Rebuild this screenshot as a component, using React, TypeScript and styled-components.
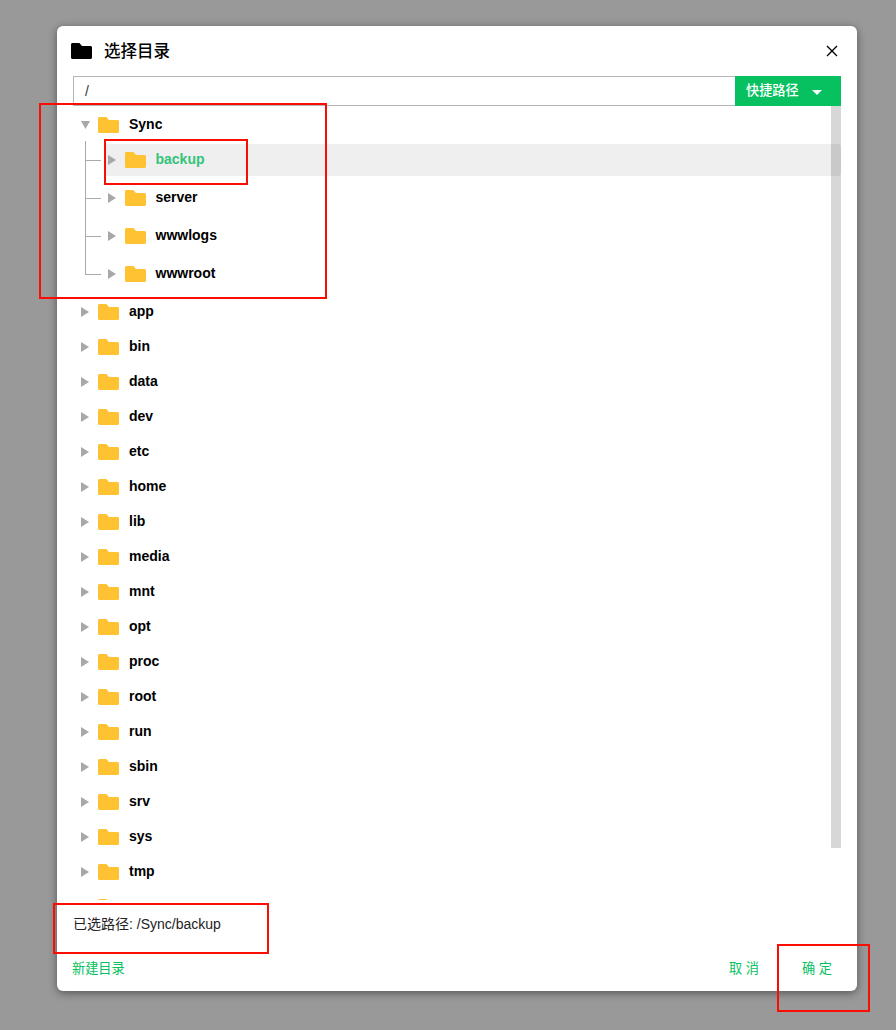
import styled, { createGlobalStyle } from "styled-components";

const GREEN = "#07c160";
const TEXT_FONT = `"Liberation Sans", "Noto Sans CJK SC", sans-serif`;

const ROOT_DIRS = [
  "app", "bin", "data", "dev", "etc", "home", "lib", "media", "mnt",
  "opt", "proc", "root", "run", "sbin", "srv", "sys", "tmp",
];
const SYNC_DIRS = ["backup", "server", "wwwlogs", "wwwroot"];

const GlobalStyle = createGlobalStyle`
  html, body {
    margin: 0;
    padding: 0;
    background: #999999;
  }
  * {
    box-sizing: border-box;
  }
`;

const Page = styled.div`
  position: relative;
  width: 896px;
  height: 1030px;
  padding: 26px 39px 0 57px;
  overflow: hidden;
  font-family: ${TEXT_FONT};
`;

const Dialog = styled.section`
  width: 800px;
  height: 965px;
  display: flex;
  flex-direction: column;
  background: #fff;
  border-radius: 6px;
  box-shadow: 0 2px 8px rgba(0, 0, 0, 0.45);
`;

const Header = styled.header`
  height: 50px;
  display: flex;
  align-items: center;
  padding: 0 15px 0 14px;
`;

const Title = styled.h2`
  flex: 1;
  margin: 0 0 3px 12px;
  font-size: 16.5px;
  font-weight: 500;
  color: #000;
`;

const CloseButton = styled.button`
  width: 20px;
  height: 20px;
  margin-bottom: 1px;
  padding: 0;
  border: 0;
  background: none;
  display: flex;
  align-items: center;
  justify-content: center;
`;

const PathBar = styled.div`
  height: 30px;
  margin: 0 16px;
  display: flex;
`;

const PathInput = styled.div`
  flex: 1;
  border: 1px solid #b5b5b5;
  border-right: 0;
  padding-left: 11px;
  font-size: 14px;
  line-height: 28px;
  color: #333;
`;

const QuickButton = styled.button`
  width: 106px;
  border: 0;
  padding: 0 0 4px 11px;
  display: flex;
  align-items: center;
  background: ${GREEN};
  color: #fff;
  font-family: ${TEXT_FONT};
  font-size: 13.2px;
  font-weight: 500;
`;

const Caret = styled.span`
  margin: 6px 0 0 13px;
  width: 0;
  height: 0;
  border-left: 5px solid transparent;
  border-right: 5px solid transparent;
  border-top: 5px solid #fff;
`;

const TreeArea = styled.div`
  position: relative;
  height: 794px;
  margin: 0 16px;
  overflow: hidden;
`;

const ScrollThumb = styled.div`
  position: absolute;
  top: 0;
  right: 0;
  width: 10px;
  height: 742px;
  background: rgba(0, 0, 0, 0.155);
`;

const DirName = styled.span<{ $selected?: boolean }>`
  margin: 0 0 3px 10px;
  font-size: 14px;
  font-weight: 700;
  color: ${(p) => (p.$selected ? "#33c47a" : "#000")};
`;

const RootRow = styled.div`
  height: 35px;
  display: flex;
  align-items: center;
  padding: 3px 0 0 8px;
`;

const ChildList = styled.div`
  display: flex;
  flex-direction: column;
  gap: 6px;
  margin: 3px 0;
  padding-left: 31px;
`;

const ChildRow = styled.div<{ $selected?: boolean; $first?: boolean }>`
  position: relative;
  height: 32px;
  display: flex;
  align-items: center;
  padding-left: 4px;
  border-radius: 4px;
  background: ${(p) => (p.$selected ? "#efefef" : "transparent")};

  ${DirName} {
    margin-bottom: 2px;
    margin-left: 9.5px;
  }

  /* tree connector */
  &::before {
    content: "";
    position: absolute;
    left: -19px;
    top: ${(p) => (p.$first ? "-3px" : "-23px")};
    height: ${(p) => (p.$first ? "19px" : "39px")};
    width: 15px;
    border-left: 1px solid #aaa;
    border-bottom: 1px solid #aaa;
  }
`;

const Arrow = styled.span<{ $open?: boolean }>`
  flex: none;
  width: ${(p) => (p.$open ? "9px" : "8px")};
  height: ${(p) => (p.$open ? "8px" : "10px")};
  margin-right: ${(p) => (p.$open ? "8px" : "9px")};
  background: #a8a8a8;
  clip-path: ${(p) =>
    p.$open ? "polygon(0 0, 100% 0, 50% 100%)" : "polygon(0 0, 100% 50%, 0 100%)"};
`;

const SelectedPath = styled.div`
  height: 48px;
  padding: 15px 0 0 16px;
  font-size: 14px;
  line-height: 18px;
  color: #222;
`;

const Footer = styled.footer`
  flex: 1;
  display: flex;
  align-items: center;
  padding: 0 25px 4px 15px;
  gap: 43px;
`;

const TextButton = styled.button<{ $push?: boolean }>`
  margin-right: ${(p) => (p.$push ? "auto" : "0")};
  padding: 0;
  border: 0;
  background: none;
  color: ${GREEN};
  font-family: ${TEXT_FONT};
  font-size: 13.2px;
`;

const Annotation = styled.div<{ $x: number; $y: number; $w: number; $h: number }>`
  position: absolute;
  left: ${(p) => p.$x}px;
  top: ${(p) => p.$y}px;
  width: ${(p) => p.$w}px;
  height: ${(p) => p.$h}px;
  border: 2px solid #fb0d05;
  pointer-events: none;
`;

function FolderIcon({ color = "#ffc232" }: { color?: string }) {
  return (
    <svg width="21" height="16" viewBox="0 0 21 16" style={{ flex: "none" }}>
      <path
        d="M1.5 0H8.4L11 3H19.5C20.3 3 21 3.7 21 4.5V14.5C21 15.3 20.3 16 19.5 16H1.5C.7 16 0 15.3 0 14.5V1.5C0 .7.7 0 1.5 0Z"
        fill={color}
      />
    </svg>
  );
}

function RootDir({ name }: { name: string }) {
  return (
    <RootRow>
      <Arrow />
      <FolderIcon />
      <DirName>{name}</DirName>
    </RootRow>
  );
}

export default function App() {
  return (
    <Page>
      <GlobalStyle />
      <Dialog>
        <Header>
          <FolderIcon color="#000" />
          <Title>选择目录</Title>
          <CloseButton>
            <svg width="12" height="12" viewBox="0 0 12 12">
              <path d="M1 1L11 11M11 1L1 11" stroke="#000" strokeWidth="1.4" />
            </svg>
          </CloseButton>
        </Header>
        <PathBar>
          <PathInput>/</PathInput>
          <QuickButton>
            快捷路径
            <Caret />
          </QuickButton>
        </PathBar>
        <TreeArea>
          <RootRow>
            <Arrow $open />
            <FolderIcon />
            <DirName>Sync</DirName>
          </RootRow>
          <ChildList>
            {SYNC_DIRS.map((name, i) => (
              <ChildRow key={name} $selected={i === 0} $first={i === 0}>
                <Arrow />
                <FolderIcon />
                <DirName $selected={i === 0}>{name}</DirName>
              </ChildRow>
            ))}
          </ChildList>
          {ROOT_DIRS.map((name) => (
            <RootDir key={name} name={name} />
          ))}
          {/* next row, only its top edge shows above the fold */}
          <RootRow>
            <Arrow />
            <FolderIcon />
          </RootRow>
          <ScrollThumb />
        </TreeArea>
        <SelectedPath>已选路径: /Sync/backup</SelectedPath>
        <Footer>
          <TextButton $push>新建目录</TextButton>
          <TextButton>取 消</TextButton>
          <TextButton>确 定</TextButton>
        </Footer>
      </Dialog>
      <Annotation $x={39} $y={103} $w={288} $h={196} />
      <Annotation $x={104} $y={139} $w={144} $h={46} />
      <Annotation $x={53} $y={903} $w={216} $h={51} />
      <Annotation $x={777} $y={944} $w={93} $h={68} />
    </Page>
  );
}
